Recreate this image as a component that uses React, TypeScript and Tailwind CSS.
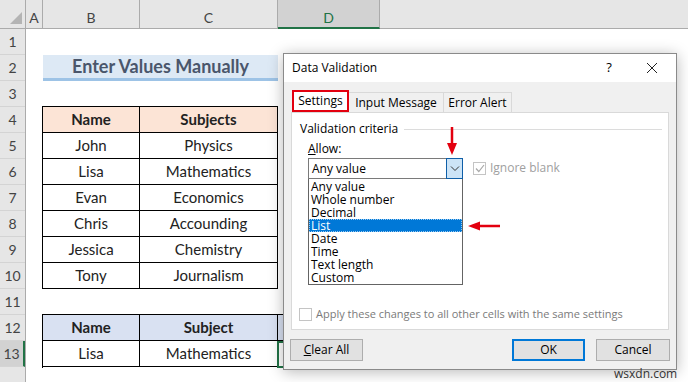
const cellFont = { fontFamily: "Lato, 'Open Sans', sans-serif" };
const uiFont = { fontFamily: "'Open Sans', 'Noto Sans', sans-serif" };

const rowNums = [1, 2, 3, 4, 5, 6, 7, 8, 9, 10, 11, 12, 13];

const people = [
  ["John", "Physics"],
  ["Lisa", "Mathematics"],
  ["Evan", "Economics"],
  ["Chris", "Accounding"],
  ["Jessica", "Chemistry"],
  ["Tony", "Journalism"],
];

const options = ["Any value", "Whole number", "Decimal", "List", "Date", "Time", "Text length", "Custom"];

const ColHeader = () => (
  <div className="flex h-[29px] border-b border-[#ababab] bg-[#e6e6e6] text-[14px] leading-[14px] text-[#444]" style={cellFont}>
    <div className="relative w-[26px] border-r border-[#ababab]">
      <div className="absolute bottom-[4px] right-[3px] h-0 w-0 border-b-[12px] border-l-[12px] border-b-[#b4b4b4] border-l-transparent" />
    </div>
    <div className="flex w-[17px] items-end justify-center border-r border-[#ababab] pb-[3px]">A</div>
    <div className="flex w-[97px] items-end justify-center border-r border-[#ababab] pb-[3px]">B</div>
    <div className="flex w-[138px] items-end justify-center border-r border-[#ababab] pb-[3px]">C</div>
    <div className="-mb-px flex w-[102px] items-end justify-center border-b-2 border-r border-b-[#217346] border-r-[#ababab] bg-[#d2d2d2] pb-[2px] text-[#217346]">D</div>
    <div className="flex-1" />
  </div>
);

const RowHeaders = () => (
  <div className="w-[26px] shrink-0 border-r border-[#ababab] bg-[#e6e6e6] text-[14px] text-[#444]" style={cellFont}>
    {rowNums.map((n) => (
      <div
        key={n}
        className={
          n === 13
            ? "flex h-[26px] items-end justify-center border-b border-r-2 border-b-[#d4d4d4] border-r-[#217346] bg-[#d2d2d2] pb-[2px]"
            : "flex h-[26px] items-end justify-center border-b border-[#d4d4d4] pb-[2px]"
        }
      >
        {n}
      </div>
    ))}
    <div className="h-[26px]" />
  </div>
);

const Cell = ({ children, bold, bg, w }: { children?: React.ReactNode; bold?: boolean; bg?: string; w: string }) => (
  <div className={`flex h-[26px] items-center justify-center border-b border-r border-black text-[15px] text-[#222] ${w} ${bg ?? ""} ${bold ? "font-bold" : ""}`}>
    {children}
  </div>
);

const Sheet = () => (
  <div className="flex flex-1 flex-col" style={cellFont}>
    <div className="h-[26px]" />
    <div className="ml-[17px] flex h-[26px] w-[235px] items-center justify-center border-b-[3px] border-[#9dc3e6] bg-[#dde9f5] text-[18px] font-bold text-[#4a566b]">
      Enter Values Manually
    </div>
    <div className="h-[26px]" />
    <div className="-mt-px ml-[16px] w-fit border-l border-t border-black">
      <div className="flex">
        <Cell w="w-[97px]" bg="bg-[#fce4d6]" bold>Name</Cell>
        <Cell w="w-[138px]" bg="bg-[#fce4d6]" bold>Subjects</Cell>
      </div>
      {people.map(([n, s]) => (
        <div key={n} className="flex">
          <Cell w="w-[97px]">{n}</Cell>
          <Cell w="w-[138px]">{s}</Cell>
        </div>
      ))}
    </div>
    <div className="h-[26px]" />
    <div className="-mt-px ml-[16px] flex w-fit border-t border-black">
      <div className="border-l border-black">
        <div className="flex">
          <Cell w="w-[97px]" bg="bg-[#d9e1f2]" bold>Name</Cell>
          <Cell w="w-[138px]" bg="bg-[#d9e1f2]" bold>Subject</Cell>
        </div>
        <div className="flex">
          <Cell w="w-[97px]">Lisa</Cell>
          <Cell w="w-[138px]">Mathematics</Cell>
        </div>
      </div>
      <div>
        <div className="h-[26px] w-[102px] border-b border-r border-black bg-[#d9e1f2]" />
        <div className="-ml-px h-[27px] w-[103px] border-2 border-[#217346]" />
      </div>
    </div>
  </div>
);

const Chevron = () => (
  <svg width="10" height="6" viewBox="0 0 10 6">
    <path d="M1 0.5 L5 4.5 L9 0.5" fill="none" stroke="#333" strokeWidth="1" />
  </svg>
);

const Dialog = () => (
  <div
    className="absolute left-[283px] top-[53px] flex h-[317px] w-[394px] flex-col border border-[#8a8a8a] bg-[#f0f0f0] text-[12px] text-black shadow-[0_2px_14px_rgba(0,0,0,0.28)]"
    style={uiFont}
  >
    <div className="flex h-[28px] items-center bg-white pl-[8px]">
      <span className="flex-1">Data Validation</span>
      <span className="w-[20px] text-center text-[13px]">?</span>
      <span className="ml-[26px] mr-[17px] flex w-[14px] justify-center">
        <svg width="12" height="12" viewBox="0 0 12 12">
          <path d="M1 1 L11 11 M11 1 L1 11" stroke="#222" strokeWidth="1" />
        </svg>
      </span>
    </div>

    <div className="mt-[8px] flex h-[22px] items-end pl-[8px]">
      <div className="flex h-[22px] w-[57px] items-center justify-center border-2 border-[#e3000f] bg-white">Settings</div>
      <div className="flex h-[20px] w-[95px] items-center justify-center border-r border-t border-[#d9d9d9] bg-[#f0f0f0]">Input Message</div>
      <div className="flex h-[20px] w-[68px] items-center justify-center border-r border-t border-[#d9d9d9] bg-[#f0f0f0]">Error Alert</div>
    </div>

    <div className="relative mx-[7px] h-[218px] border border-[#d9d9d9] bg-white">
      <div className="mt-[7px] flex items-center pl-[8px] pr-[6px]">
        <span>Validation criteria</span>
        <div className="ml-[6px] h-px flex-1 bg-[#dcdcdc]" />
      </div>
      <div className="ml-[16px] mt-[2px]">
        <u>A</u>llow:
      </div>
      <div className="ml-[16px] flex items-start">
        <div className="w-[155px]">
          <div className="flex h-[21px] items-center border border-[#7a7a7a] pl-[3px]">
            <span className="flex-1">Any value</span>
            <div className="-mr-px flex h-[21px] w-[17px] items-center justify-center border border-[#0f5fa8] bg-[#cce4f7]">
              <Chevron />
            </div>
          </div>
          <div className="border border-t-0 border-[#646464] bg-white pt-px text-[12px] leading-[13px]">
            {options.map((o) => (
              <div
                key={o}
                className={o === "List" ? "h-[13px] border border-dotted border-[#99c9ef] bg-[#0078d7] pl-[1px] leading-[11px] text-white" : "h-[13px] pl-[2px]"}
              >
                {o}
              </div>
            ))}
          </div>
        </div>
        <div className="ml-[10px] mt-[1px] flex items-center text-[#a0a0a0]">
          <div className="flex h-[13px] w-[13px] items-center justify-center border border-[#c4c4c4]">
            <svg width="10" height="9" viewBox="0 0 10 9">
              <path d="M1 4.5 L3.8 7.5 L9 1" fill="none" stroke="#a8a8a8" strokeWidth="1.2" />
            </svg>
          </div>
          <span className="ml-[4px]">Ignore blank</span>
        </div>
      </div>

      <div className="absolute left-[7px] top-[193px] flex items-center text-[11px] text-[#7a7a7a]">
        <div className="h-[13px] w-[13px] border border-[#c4c4c4]" />
        <span className="ml-[4px]">Apply these changes to all other cells with the same settings</span>
      </div>
    </div>

    <div className="mx-[6px] mt-[9px] flex items-center">
      <button className="h-[22px] w-[73px] border border-[#adadad] bg-[#e1e1e1]">
        <u>C</u>lear All
      </button>
      <div className="flex-1" />
      <button className="h-[22px] w-[73px] border-2 border-[#0078d7] bg-[#e1e1e1]">OK</button>
      <button className="ml-[11px] h-[22px] w-[74px] border border-[#adadad] bg-[#e1e1e1]">Cancel</button>
    </div>
  </div>
);

const Arrows = () => (
  <>
    <svg className="absolute left-[446px] top-[127px]" width="12" height="30" viewBox="0 0 12 30">
      <path d="M6 0 L6 18" stroke="#e3000f" strokeWidth="2.5" />
      <path d="M1 16 L6 28 L11 16 Z" fill="#e3000f" />
    </svg>
    <svg className="absolute left-[466px] top-[220px]" width="36" height="12" viewBox="0 0 36 12">
      <path d="M12 6 L34 6" stroke="#e3000f" strokeWidth="2.5" />
      <path d="M2 6 L14 1.5 L14 10.5 Z" fill="#e3000f" />
    </svg>
  </>
);

export default function App() {
  return (
    <div className="relative h-[382px] w-[688px] overflow-hidden bg-white">
      <ColHeader />
      <div className="flex">
        <RowHeaders />
        <Sheet />
      </div>
      <Dialog />
      <Arrows />
      <div className="absolute left-[614px] top-[368px] text-[12px] leading-none text-[#333]" style={uiFont}>
        wsxdn.com
      </div>
    </div>
  );
}
